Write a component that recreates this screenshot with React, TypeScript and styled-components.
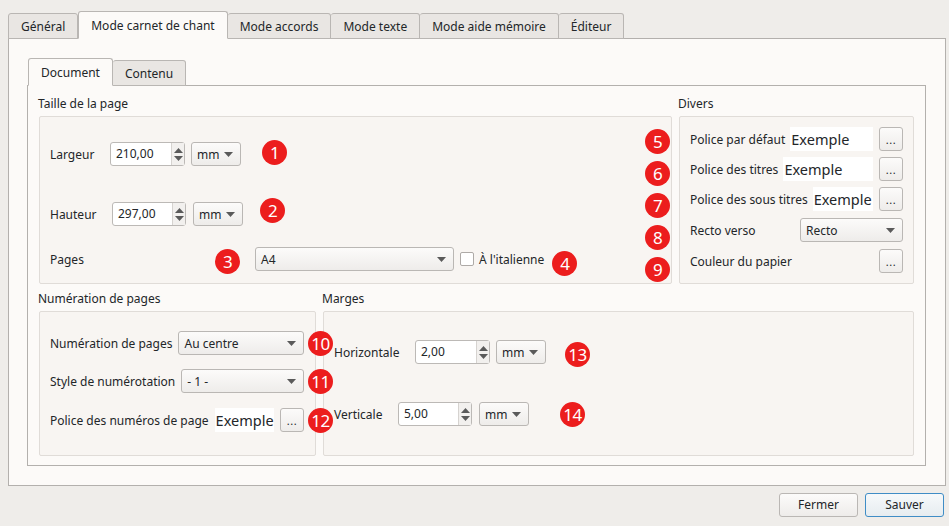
import React from 'react';
import styled, { createGlobalStyle } from 'styled-components';

const GlobalStyle = createGlobalStyle`
  html, body {
    margin: 0;
    padding: 0;
    background: #efedea;
  }
  body {
    font-family: "Noto Sans", "DejaVu Sans", sans-serif;
    font-size: 12px;
    color: #232629;
  }
  * { box-sizing: border-box; }
`;

const Window = styled.div`
  height: 526px;
  display: flex;
  flex-direction: column;
  padding: 11px 3px 9px 8px;
`;

const TabBar = styled.div<{ $inset?: number }>`
  display: flex;
  align-items: flex-end;
  height: 27px;
  padding-left: ${p => p.$inset || 0}px;
`;

const Tab = styled.div<{ $active?: boolean }>`
  height: ${p => (p.$active ? 28 : 26)}px;
  margin-bottom: -1px;
  padding: 0 12px;
  display: flex;
  align-items: center;
  border: 1px solid #b9b6b3;
  border-left-width: ${p => (p.$active ? 1 : 0)}px;
  border-bottom-color: ${p => (p.$active ? '#fcfaf8' : '#b9b6b3')};
  border-radius: 3px 3px 0 0;
  background: ${p => (p.$active ? '#fcfaf8' : '#e9e6e3')};
  position: relative;
  z-index: ${p => (p.$active ? 2 : 1)};
  white-space: nowrap;
  &:first-child { border-left-width: 1px; }
`;

const OuterPane = styled.div`
  flex: 1;
  display: flex;
  flex-direction: column;
  border: 1px solid #b3b0ad;
  background: #fcfaf8;
  padding: 19px 19px 19px 18px;
`;

const InnerPane = styled.div`
  flex: 1;
  display: flex;
  flex-direction: column;
  border: 1px solid #b3b0ad;
  background: #fcfaf8;
  padding: 9px 11px 9px 11px;
`;

const GroupRow = styled.div<{ $grow?: boolean }>`
  display: flex;
  gap: 7px;
  flex: ${p => (p.$grow ? 1 : 'none')};
  margin-top: ${p => (p.$grow ? 6 : 0)}px;
`;

const Group = styled.div<{ $w?: number }>`
  display: flex;
  flex-direction: column;
  width: ${p => (p.$w ? `${p.$w}px` : 'auto')};
  flex: ${p => (p.$w ? 'none' : 1)};
`;

const GroupTitle = styled.div`
  height: 18px;
  line-height: 18px;
  margin: 0 0 3px -1px;
`;

const GroupBox = styled.div<{ $h?: number }>`
  position: relative;
  border: 1px solid #e0dcd8;
  border-radius: 2px;
  background: #f8f5f2;
  height: ${p => (p.$h ? `${p.$h}px` : 'auto')};
  flex: ${p => (p.$h ? 'none' : 1)};
`;

const SizeBox = styled(GroupBox)`
  display: flex;
`;

const SizeContent = styled.div`
  flex: 1;
  padding: 25px 0 0 10px;
  display: flex;
  flex-direction: column;
`;

const BadgeColumn = styled.div`
  width: 25px;
  margin-right: 1px;
  padding-top: 12px;
  display: flex;
  flex-direction: column;
  gap: 7px;
`;

const FormColumn = styled.div<{ $pad: string; $gap: number }>`
  display: flex;
  flex-direction: column;
  gap: ${p => p.$gap}px;
  padding: ${p => p.$pad};
`;

const Row = styled.div<{ $top?: number }>`
  position: relative;
  display: flex;
  align-items: center;
  height: 24px;
  margin-top: ${p => p.$top || 0}px;
`;

const Label = styled.span<{ $w?: number }>`
  white-space: nowrap;
  flex: none;
  width: ${p => (p.$w ? `${p.$w}px` : 'auto')};
`;

const Gap = styled.span<{ $w: number }>`
  flex: none;
  width: ${p => p.$w}px;
`;

const Spacer = styled.span`
  flex: 1;
`;

const Badge = styled.span<{ $shift?: number }>`
  flex: none;
  width: 25px;
  height: 25px;
  border-radius: 50%;
  background: #ec1d1d;
  color: #fff;
  font-size: 17px;
  line-height: 25px;
  text-align: center;
  letter-spacing: -0.5px;
  transform: translateY(${p => p.$shift || 0}px);
`;

const SideBadge = styled(Badge)`
  position: absolute;
  right: -29px;
  top: 0;
  z-index: 3;
`;

const Spin = styled.div<{ $w: number }>`
  flex: none;
  width: ${p => p.$w}px;
  height: 24px;
  display: flex;
  border: 1px solid #bcb9b6;
  border-radius: 3px;
  background: #fff;
`;

const SpinValue = styled.span`
  flex: 1;
  padding-left: 5px;
  line-height: 22px;
`;

const SpinButtons = styled.span`
  width: 13px;
  border-left: 1px solid #d6d3d0;
  background: #f2f0ee;
  display: flex;
  flex-direction: column;
  align-items: center;
  justify-content: center;
  gap: 3px;
`;

const Combo = styled.div<{ $w?: number }>`
  flex: ${p => (p.$w ? 'none' : 1)};
  width: ${p => (p.$w ? `${p.$w}px` : 'auto')};
  height: 24px;
  display: flex;
  align-items: center;
  padding: 0 7px 0 5px;
  border: 1px solid #bab7b4;
  border-radius: 3px;
  background: linear-gradient(#fcfbfa, #eeecea);
  white-space: nowrap;
`;

const ComboText = styled.span`
  flex: 1;
`;

const Dots = styled.div`
  flex: none;
  width: 24px;
  height: 24px;
  border: 1px solid #bab7b4;
  border-radius: 3px;
  background: linear-gradient(#fcfbfa, #eeecea);
  text-align: center;
  font-size: 11px;
  line-height: 24px;
  letter-spacing: 0.5px;
`;

const Preview = styled.div<{ $lead: number }>`
  flex: 1;
  height: 24px;
  margin: 0 6px 0 ${p => p.$lead}px;
  background: #fff;
  font-size: 14.5px;
  line-height: 24px;
  padding-left: 1px;
  overflow: hidden;
  white-space: nowrap;
`;

const Check = styled.span`
  flex: none;
  width: 14px;
  height: 14px;
  border: 1px solid #aeaaa7;
  border-radius: 2px;
  background: #fff;
`;

const Footer = styled.div`
  display: flex;
  justify-content: flex-end;
  gap: 7px;
  margin-top: 7px;
  padding-right: 2px;
`;

const DialogButton = styled.div<{ $default?: boolean }>`
  width: 79px;
  height: 24px;
  line-height: 22px;
  text-align: center;
  border: 1px solid ${p => (p.$default ? '#3f8dc6' : '#bab7b4')};
  border-radius: 3px;
  background: ${p => (p.$default ? 'linear-gradient(#f6f9fb, #e6ecf0)' : 'linear-gradient(#fcfbfa, #eeecea)')};
`;

const Arrow = () => (
  <svg width="9" height="5" viewBox="0 0 9 5">
    <path d="M0 0 L9 0 L4.5 5 Z" fill="#5a5a5a" />
  </svg>
);

const SpinBox = ({ value, w = 75 }: { value: string; w?: number }) => (
  <Spin $w={w}>
    <SpinValue>{value}</SpinValue>
    <SpinButtons>
      <svg width="9" height="5" viewBox="0 0 9 5">
        <path d="M0 5 L9 5 L4.5 0 Z" fill="#5a5a5a" />
      </svg>
      <svg width="9" height="5" viewBox="0 0 9 5">
        <path d="M0 0 L9 0 L4.5 5 Z" fill="#5a5a5a" />
      </svg>
    </SpinButtons>
  </Spin>
);

const Select = ({ value, w }: { value: string; w?: number }) => (
  <Combo $w={w}>
    <ComboText>{value}</ComboText>
    <Arrow />
  </Combo>
);

const outerTabs = ['Général', 'Mode carnet de chant', 'Mode accords', 'Mode texte', 'Mode aide mémoire', 'Éditeur'];

export default function App() {
  return (
    <>
      <GlobalStyle />
      <Window>
        <TabBar>
          {outerTabs.map(t => (
            <Tab key={t} $active={t === 'Mode carnet de chant'}>{t}</Tab>
          ))}
        </TabBar>
        <OuterPane>
          <TabBar $inset={1}>
            <Tab $active>Document</Tab>
            <Tab>Contenu</Tab>
          </TabBar>
          <InnerPane>
            <GroupRow>
              <Group>
                <GroupTitle>Taille de la page</GroupTitle>
                <SizeBox $h={168}>
                  <SizeContent>
                    <Row>
                      <Label $w={60}>Largeur</Label>
                      <SpinBox value="210,00" />
                      <Gap $w={6} />
                      <Select value="mm" w={50} />
                      <Gap $w={21} />
                      <Badge $shift={-2}>1</Badge>
                    </Row>
                    <Row $top={36}>
                      <Label $w={62}>Hauteur</Label>
                      <SpinBox value="297,00" w={74} />
                      <Gap $w={7} />
                      <Select value="mm" w={50} />
                      <Gap $w={17} />
                      <Badge $shift={-4}>2</Badge>
                    </Row>
                    <Row $top={21}>
                      <Label $w={165}>Pages</Label>
                      <Badge $shift={2}>3</Badge>
                      <Gap $w={15} />
                      <Select value="A4" w={199} />
                      <Gap $w={6} />
                      <Check />
                      <Gap $w={5} />
                      <Label>À l'italienne</Label>
                      <Gap $w={8} />
                      <Badge $shift={4}>4</Badge>
                    </Row>
                  </SizeContent>
                  <BadgeColumn>
                    {['5', '6', '7', '8', '9'].map(n => (
                      <Badge key={n}>{n}</Badge>
                    ))}
                  </BadgeColumn>
                </SizeBox>
              </Group>
              <Group $w={235}>
                <GroupTitle>Divers</GroupTitle>
                <GroupBox $h={168}>
                  <FormColumn $pad="10px 10px 0 10px" $gap={6}>
                    <Row>
                      <Label>Police par défaut</Label>
                      <Preview $lead={5}>Exemple</Preview>
                      <Dots>...</Dots>
                    </Row>
                    <Row>
                      <Label>Police des titres</Label>
                      <Preview $lead={5}>Exemple</Preview>
                      <Dots>...</Dots>
                    </Row>
                    <Row>
                      <Label>Police des sous titres</Label>
                      <Preview $lead={5}>Exemple</Preview>
                      <Dots>...</Dots>
                    </Row>
                    <Row $top={1}>
                      <Label>Recto verso</Label>
                      <Spacer />
                      <Select value="Recto" w={103} />
                    </Row>
                    <Row $top={1}>
                      <Label>Couleur du papier</Label>
                      <Spacer />
                      <Dots>...</Dots>
                    </Row>
                  </FormColumn>
                </GroupBox>
              </Group>
            </GroupRow>
            <GroupRow $grow>
              <Group $w={277}>
                <GroupTitle>Numération de pages</GroupTitle>
                <GroupBox>
                  <FormColumn $pad="19px 11px 0 10px" $gap={14}>
                    <Row>
                      <Label>Numération de pages</Label>
                      <Gap $w={6} />
                      <Select value="Au centre" />
                      <SideBadge>10</SideBadge>
                    </Row>
                    <Row>
                      <Label>Style de numérotation</Label>
                      <Gap $w={6} />
                      <Select value="- 1 -" />
                      <SideBadge>11</SideBadge>
                    </Row>
                    <Row $top={1}>
                      <Label>Police des numéros de page</Label>
                      <Preview $lead={6}>Exemple</Preview>
                      <Dots>...</Dots>
                      <SideBadge>12</SideBadge>
                    </Row>
                  </FormColumn>
                </GroupBox>
              </Group>
              <Group>
                <GroupTitle>Marges</GroupTitle>
                <GroupBox>
                  <FormColumn $pad="28px 0 0 10px" $gap={38}>
                    <Row>
                      <Label $w={81}>Horizontale</Label>
                      <SpinBox value="2,00" />
                      <Gap $w={6} />
                      <Select value="mm" w={50} />
                      <Gap $w={19} />
                      <Badge $shift={2}>13</Badge>
                    </Row>
                    <Row>
                      <Label $w={64}>Verticale</Label>
                      <SpinBox value="5,00" w={74} />
                      <Gap $w={7} />
                      <Select value="mm" w={50} />
                      <Gap $w={31} />
                      <Badge>14</Badge>
                    </Row>
                  </FormColumn>
                </GroupBox>
              </Group>
            </GroupRow>
          </InnerPane>
        </OuterPane>
        <Footer>
          <DialogButton>Fermer</DialogButton>
          <DialogButton $default>Sauver</DialogButton>
        </Footer>
      </Window>
    </>
  );
}
